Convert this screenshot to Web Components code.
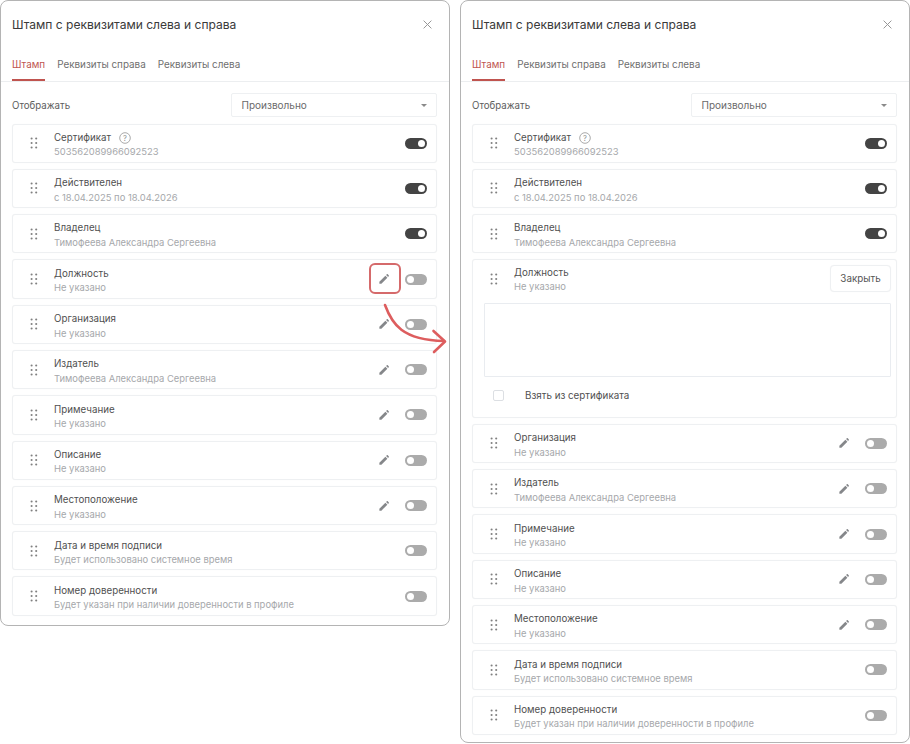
<!DOCTYPE html>
<html lang="ru">
<head>
<meta charset="utf-8">
<title>Штамп</title>
<style>
  html, body { margin: 0; padding: 0; background: #fff; }
  body { font-family: Inter, "Liberation Sans", sans-serif; width: 910px; height: 744px; overflow: hidden; position: relative; }
  .stage { display: flex; align-items: flex-start; gap: 10px; }
</style>
</head>
<body>
<template id="stamp-row-tpl">
  <style>
    :host { display: block; box-sizing: border-box; border: 1px solid #eef0f2; border-radius: 3px; background: #fff; box-shadow: 0 0 1px rgba(0,0,0,.05); }
    .top { display: flex; align-items: center; height: 37.3px; padding: 0 9px 0 0; }
    .grip { width: 41px; display: flex; justify-content: center; flex: none; }
    .text { flex: 1; min-width: 0; padding-top: 4px; }
    .label { font-size: 9.75px; line-height: 14px; color: #505050; display: flex; align-items: center; gap: 8px; }
    .value { font-size: 9.42px; line-height: 14px; color: #a6a8ab; margin-top: .5px; white-space: nowrap; }
    .actions { display: flex; align-items: center; gap: 16px; flex: none; }
    .edit { display: none; width: 10px; height: 10px; }
    :host([editable]) .edit { display: block; }
    .help { display: none; }
    :host([help]) .help { display: block; }
    .panel { display: none; }
    :host([open]) .top { height: 43px; align-items: flex-start; padding: 4.5px 5px 0 0; box-sizing: border-box; }
    :host([open]) .text { padding-top: 1px; }
    :host([open]) .grip { padding-top: 8px; }
    :host([open]) .panel { display: block; padding: 0 5px 3px 11px; }
    :host([open]) .edit { display: none; }
    :host([open]) stamp-toggle { display: none; }
    .close { display: none; font: inherit; font-size: 9.8px; color: #555; background: #fff; border: 1px solid #eef0f2; border-radius: 4px; height: 27px; width: 61px; padding: 0; box-shadow: 0 0 1px rgba(0,0,0,.05); }
    :host([open]) .close { display: block; }
    .area { height: 73.4px; border: 1px solid #e9ecf0; border-radius: 1px; box-sizing: border-box; }
    .check { display: flex; align-items: center; height: 37px; padding-left: 9px; font-size: 9.8px; color: #505050; }
    .box { flex: none; width: 8.5px; height: 8.5px; border: 1px solid #dcdfe3; border-radius: 2px; margin-right: 21.5px; }
  </style>
  <div class="top">
    <div class="grip">
      <svg width="8" height="12" viewBox="0 0 8 12" fill="#808080"><circle cx="1.6" cy="1.5" r="1.05"/><circle cx="6.2" cy="1.5" r="1.05"/><circle cx="1.6" cy="6" r="1.05"/><circle cx="6.2" cy="6" r="1.05"/><circle cx="1.6" cy="10.5" r="1.05"/><circle cx="6.2" cy="10.5" r="1.05"/></svg>
    </div>
    <div class="text">
      <div class="label"><slot name="label"></slot>
        <svg class="help" width="12" height="12" viewBox="0 0 12 12"><circle cx="6" cy="6" r="5.3" fill="none" stroke="#a0a0a0" stroke-width=".9"/><text x="6" y="8.7" font-size="7.6" text-anchor="middle" fill="#8f8f8f" font-family="Inter, sans-serif">?</text></svg>
      </div>
      <div class="value"><slot name="value"></slot></div>
    </div>
    <div class="actions">
      <svg class="edit" viewBox="0 0 11 11" fill="#85878a"><path d="M0.4 8.4 7 1.8 9.2 4 2.6 10.6H0.4Z"/><path d="M7.8 1 8.6.3c.3-.3.7-.3 1 0l1.1 1.1c.3.3.3.7 0 1L10 3.2Z"/></svg>
      <stamp-toggle></stamp-toggle>
      <button class="close" type="button">Закрыть</button>
    </div>
  </div>
  <div class="panel">
    <div class="area"></div>
    <div class="check"><span class="box"></span>Взять из сертификата</div>
  </div>
</template>

<div class="stage">
  <stamp-dialog height="626">
    <stamp-row on help><span slot="label">Сертификат</span><span slot="value">503562089966092523</span></stamp-row>
    <stamp-row on><span slot="label">Действителен</span><span slot="value">с 18.04.2025 по 18.04.2026</span></stamp-row>
    <stamp-row on><span slot="label">Владелец</span><span slot="value">Тимофеева Александра Сергеевна</span></stamp-row>
    <stamp-row editable><span slot="label">Должность</span><span slot="value">Не указано</span></stamp-row>
    <stamp-row editable><span slot="label">Организация</span><span slot="value">Не указано</span></stamp-row>
    <stamp-row editable><span slot="label">Издатель</span><span slot="value">Тимофеева Александра Сергеевна</span></stamp-row>
    <stamp-row editable><span slot="label">Примечание</span><span slot="value">Не указано</span></stamp-row>
    <stamp-row editable><span slot="label">Описание</span><span slot="value">Не указано</span></stamp-row>
    <stamp-row editable><span slot="label">Местоположение</span><span slot="value">Не указано</span></stamp-row>
    <stamp-row><span slot="label">Дата и время подписи</span><span slot="value">Будет использовано системное время</span></stamp-row>
    <stamp-row><span slot="label">Номер доверенности</span><span slot="value">Будет указан при наличии доверенности в профиле</span></stamp-row>
  </stamp-dialog>
  <stamp-dialog height="743">
    <stamp-row on help><span slot="label">Сертификат</span><span slot="value">503562089966092523</span></stamp-row>
    <stamp-row on><span slot="label">Действителен</span><span slot="value">с 18.04.2025 по 18.04.2026</span></stamp-row>
    <stamp-row on><span slot="label">Владелец</span><span slot="value">Тимофеева Александра Сергеевна</span></stamp-row>
    <stamp-row open><span slot="label">Должность</span><span slot="value">Не указано</span></stamp-row>
    <stamp-row editable><span slot="label">Организация</span><span slot="value">Не указано</span></stamp-row>
    <stamp-row editable><span slot="label">Издатель</span><span slot="value">Тимофеева Александра Сергеевна</span></stamp-row>
    <stamp-row editable><span slot="label">Примечание</span><span slot="value">Не указано</span></stamp-row>
    <stamp-row editable><span slot="label">Описание</span><span slot="value">Не указано</span></stamp-row>
    <stamp-row editable><span slot="label">Местоположение</span><span slot="value">Не указано</span></stamp-row>
    <stamp-row><span slot="label">Дата и время подписи</span><span slot="value">Будет использовано системное время</span></stamp-row>
    <stamp-row><span slot="label">Номер доверенности</span><span slot="value">Будет указан при наличии доверенности в профиле</span></stamp-row>
  </stamp-dialog>
</div>

<stamp-highlight></stamp-highlight>
<stamp-callout></stamp-callout>

<script>
class StampToggle extends HTMLElement {
  constructor() {
    super();
    this.attachShadow({ mode: "open" });
    this.shadowRoot.innerHTML = `
      <style>
        :host { display: block; width: 22.5px; height: 11px; border-radius: 6px; background: #ababab; position: relative; }
        :host([on]) { background: #444; }
        i { position: absolute; top: 2px; left: 2px; width: 7px; height: 7px; border-radius: 50%; background: #fff; }
        :host([on]) i { left: 13.5px; }
      </style>
      <i></i>`;
  }
}

class StampRow extends HTMLElement {
  constructor() {
    super();
    this.attachShadow({ mode: "open" });
    const tpl = document.getElementById("stamp-row-tpl");
    this.shadowRoot.appendChild(tpl.content.cloneNode(true));
  }
  connectedCallback() {
    if (this.hasAttribute("on")) {
      this.shadowRoot.querySelector("stamp-toggle").setAttribute("on", "");
    }
  }
}

class StampDialog extends HTMLElement {
  constructor() {
    super();
    this.attachShadow({ mode: "open" });
    this.render();
  }
  connectedCallback() {
    this.style.height = (this.getAttribute("height") || 626) + "px";
  }
  render() {
    this.shadowRoot.innerHTML = `
      <style>
        :host { display: block; box-sizing: border-box; width: 450px; background: #fff; border: 1px solid #b4b4b4; border-radius: 8px; color: #4b4b4b; }
        .head { display: flex; align-items: center; justify-content: space-between; height: 46px; padding: 0 17px 0 11px; }
        h2 { margin: 0; font-size: 12.05px; font-weight: 400; color: #3a3a3a; }
        .tabs { display: flex; gap: 12px; height: 34px; padding: 0 11px; border-bottom: 1px solid #eceef0; box-sizing: content-box; }
        .tab { font-size: 9.9px; line-height: 34px; color: #6f6f6f; box-sizing: border-box; height: 34px; }
        .tab.on { color: #c0544f; border-bottom: 2px solid #c0544f; }
        .show { display: flex; align-items: center; justify-content: space-between; height: 24px; margin-top: 11px; padding: 0 12px 0 11px; font-size: 9.7px; color: #5d5d5d; }
        .show span { padding-top: 1px; }
        .select { box-sizing: border-box; width: 206px; height: 24px; border: 1px solid #eef0f2; border-radius: 2px; display: flex; align-items: center; justify-content: space-between; padding: 0 9px 0 9.5px; font-size: 10px; color: #6a6a6a; }
        .select i { border: 3px solid transparent; border-top: 3.5px solid #8a8a8a; border-bottom: 0; }
        .rows { display: flex; flex-direction: column; gap: 6px; padding: 6.5px 12px 0 11px; }
      </style>
      <div class="head">
        <h2>Штамп с реквизитами слева и справа</h2>
        <svg width="9" height="9" viewBox="0 0 9 9" stroke="#979797" stroke-width="1"><path d="M.6.6 8.4 8.4M8.4.6.6 8.4"/></svg>
      </div>
      <div class="tabs"><span class="tab on">Штамп</span><span class="tab">Реквизиты справа</span><span class="tab">Реквизиты слева</span></div>
      <div class="show"><span>Отображать</span><div class="select">Произвольно<i></i></div></div>
      <div class="rows"><slot></slot></div>`;
  }
}

class StampHighlight extends HTMLElement {
  constructor() {
    super();
    this.attachShadow({ mode: "open" });
    this.shadowRoot.innerHTML = `<style>:host { position: absolute; left: 369px; top: 263px; width: 32px; height: 31px; box-sizing: border-box; border: 2px solid #d56a6b; border-radius: 6px; }</style>`;
  }
}

class StampCallout extends HTMLElement {
  constructor() {
    super();
    this.attachShadow({ mode: "open" });
    this.shadowRoot.innerHTML = `
      <style>:host { position: absolute; left: 380px; top: 300px; width: 70px; height: 60px; pointer-events: none; }</style>
      <svg width="70" height="60" viewBox="0 0 70 60" fill="none" stroke="#dd5d5e" stroke-width="2.6" stroke-linecap="round" stroke-linejoin="round">
        <path d="M5 5C12 24 22 40 64 41"/>
        <path d="M53.5 31 65 41.5 54 52"/>
      </svg>`;
  }
}

customElements.define("stamp-toggle", StampToggle);
customElements.define("stamp-row", StampRow);
customElements.define("stamp-dialog", StampDialog);
customElements.define("stamp-highlight", StampHighlight);
customElements.define("stamp-callout", StampCallout);
</script>
</body>
</html>
